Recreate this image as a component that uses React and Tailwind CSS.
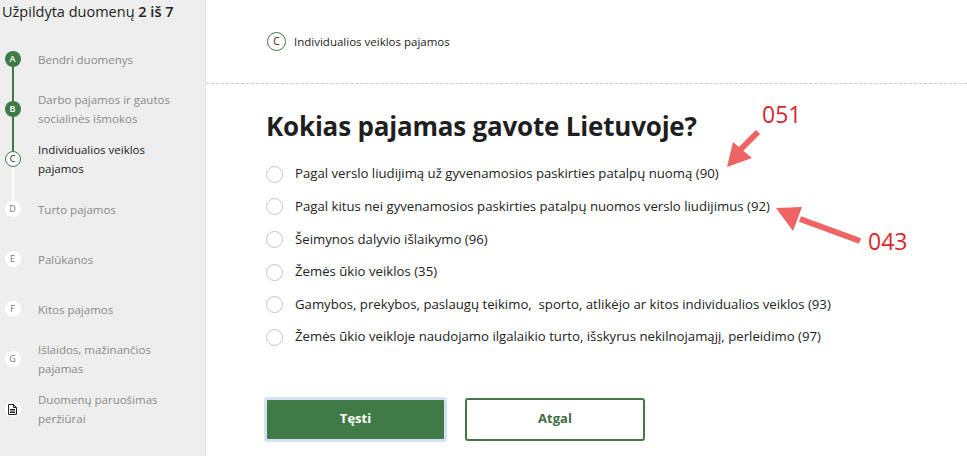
import { Fragment } from "react";

const steps = [
  { key: "A", label: ["Bendri duomenys"], state: "done", up: null, down: "green" },
  { key: "B", label: ["Darbo pajamos ir gautos", "socialinės išmokos"], state: "done", up: "green", down: "green" },
  { key: "C", label: ["Individualios veiklos", "pajamos"], state: "current", up: "green", down: "white" },
  { key: "D", label: ["Turto pajamos"], state: "todo", up: "white", down: null },
  { key: "E", label: ["Palūkanos"], state: "todo" },
  { key: "F", label: ["Kitos pajamos"], state: "todo" },
  { key: "G", label: ["Išlaidos, mažinančios", "pajamas"], state: "todo" },
  { key: "doc", label: ["Duomenų paruošimas", "peržiūrai"], state: "todo" },
];

const options = [
  "Pagal verslo liudijimą už gyvenamosios paskirties patalpų nuomą (90)",
  "Pagal kitus nei gyvenamosios paskirties patalpų nuomos verslo liudijimus (92)",
  "Šeimynos dalyvio išlaikymo (96)",
  "Žemės ūkio veiklos (35)",
  "Gamybos, prekybos, paslaugų teikimo,  sporto, atlikėjo ar kitos individualios veiklos (93)",
  "Žemės ūkio veikloje naudojamo ilgalaikio turto, išskyrus nekilnojamąjį, perleidimo (97)",
];

function Segment({ color }) {
  if (!color) return <div className="flex-1" />;
  return (
    <div
      className={`w-[2px] flex-1 ${color === "green" ? "bg-[#3f7a47]" : "bg-white"}`}
    />
  );
}

function DocIcon() {
  return (
    <svg width="9" height="11" viewBox="0 0 9 11" fill="none" stroke="#222" strokeWidth="1">
      <path d="M0.5 0.5h5l3 3v7h-8z" />
      <path d="M5.5 0.5v3h3" />
      <path d="M2 5.5h5M2 7h5M2 8.5h5" />
    </svg>
  );
}

function StepDot({ step }) {
  if (step.key === "doc") {
    return (
      <div className="grid size-4 place-items-center rounded-full bg-white">
        <DocIcon />
      </div>
    );
  }
  if (step.state === "done") {
    return (
      <div className="grid size-4 place-items-center rounded-full bg-[#3f7a47] text-[9px] font-semibold text-white">
        {step.key}
      </div>
    );
  }
  if (step.state === "current") {
    return (
      <div className="grid size-4 place-items-center rounded-full border border-[#3f7a47] bg-white text-[9px] text-[#222]">
        {step.key}
      </div>
    );
  }
  return (
    <div className="grid size-4 place-items-center rounded-full bg-white text-[9px] text-[#777]">
      {step.key}
    </div>
  );
}

function Sidebar() {
  return (
    <aside className="h-[456px] w-[206px] shrink-0 border-r border-[#e2e2e2] bg-[#eeeeee]">
      <div className="h-[34px] pl-[2px] pt-[1px] text-[14.5px] leading-[22px] text-[#222]">
        Užpildyta duomenų <b className="font-semibold">2 iš 7</b>
      </div>
      {steps.map((step) => (
        <div key={step.key} className="flex h-[50px] items-stretch">
          <div className="flex w-[24px] shrink-0 flex-col items-center pl-[1px]">
            <Segment color={step.up} />
            <StepDot step={step} />
            <Segment color={step.down} />
          </div>
          <div
            className={`ml-[14px] flex flex-col justify-center text-[11.5px] leading-[19px] ${
              step.state === "current" ? "text-[#222]" : "text-[#8a8a8a]"
            }`}
          >
            {step.label.map((line) => (
              <span key={line}>{line}</span>
            ))}
          </div>
        </div>
      ))}
    </aside>
  );
}

function Arrow({ x1, y1, x2, y2 }) {
  return <line x1={x1} y1={y1} x2={x2} y2={y2} stroke="#ee6363" strokeWidth="6" />;
}

export default function App() {
  return (
    <div
      className="relative flex h-[456px] w-[967px] overflow-hidden bg-white"
      style={{ fontFamily: '"Open Sans", "Noto Sans", sans-serif' }}
    >
      <Sidebar />
      <main className="flex-1">
        <div className="flex h-[83px] items-start pl-[61px] pt-[32px]">
          <div className="flex items-center gap-[8px]">
            <div className="grid size-[19px] place-items-center rounded-full border border-[#3f7a47] text-[10px] text-[#222]">
              C
            </div>
            <span className="text-[11.5px] text-[#222]">Individualios veiklos pajamos</span>
          </div>
        </div>
        <div className="border-t border-dashed border-[#c8c8c8]" />
        <div className="pl-[60px] pt-[25px]">
          <h1 className="text-[26px] font-bold leading-[34px] tracking-[-0.2px] text-[#1f1f1f]">
            Kokias pajamas gavote Lietuvoje?
          </h1>
          <div className="mt-[15px] flex flex-col">
            {options.map((opt) => (
              <label key={opt} className="flex h-[32.6px] items-center gap-[12px]">
                <span className="size-[17px] shrink-0 rounded-full border border-[#c4c4c4] bg-white" />
                <span className="whitespace-pre text-[13.2px] text-[#222]">{opt}</span>
              </label>
            ))}
          </div>
          <div className="-ml-[2px] mt-[43px] flex gap-[18px]">
            <button className="h-[45px] w-[183px] rounded-[4px] border-[3px] border-[#d3e0f5] bg-[#3f7a47] text-[13px] font-bold text-white">
              Tęsti
            </button>
            <button className="mt-[1px] h-[43px] w-[180px] rounded-[3px] border-2 border-[#3f7a47] bg-white text-[13px] font-bold text-[#3f6e3f]">
              Atgal
            </button>
          </div>
        </div>
      </main>
      <div className="absolute left-[762px] top-[100px] text-[23px] leading-[28px] text-[#d7282f]">051</div>
      <div className="absolute left-[868px] top-[227px] text-[23px] leading-[28px] text-[#d7282f]">043</div>
      <svg className="pointer-events-none absolute left-0 top-0" width="967" height="456">
        <Arrow x1={758} y1={132} x2={740} y2={150} />
        <polygon points="727,167 733,142 752,158" fill="#ee6363" />
        <Arrow x1={860} y1={241} x2={800} y2={219} />
        <polygon points="776,208 802,207 793,231" fill="#ee6363" />
      </svg>
    </div>
  );
}
